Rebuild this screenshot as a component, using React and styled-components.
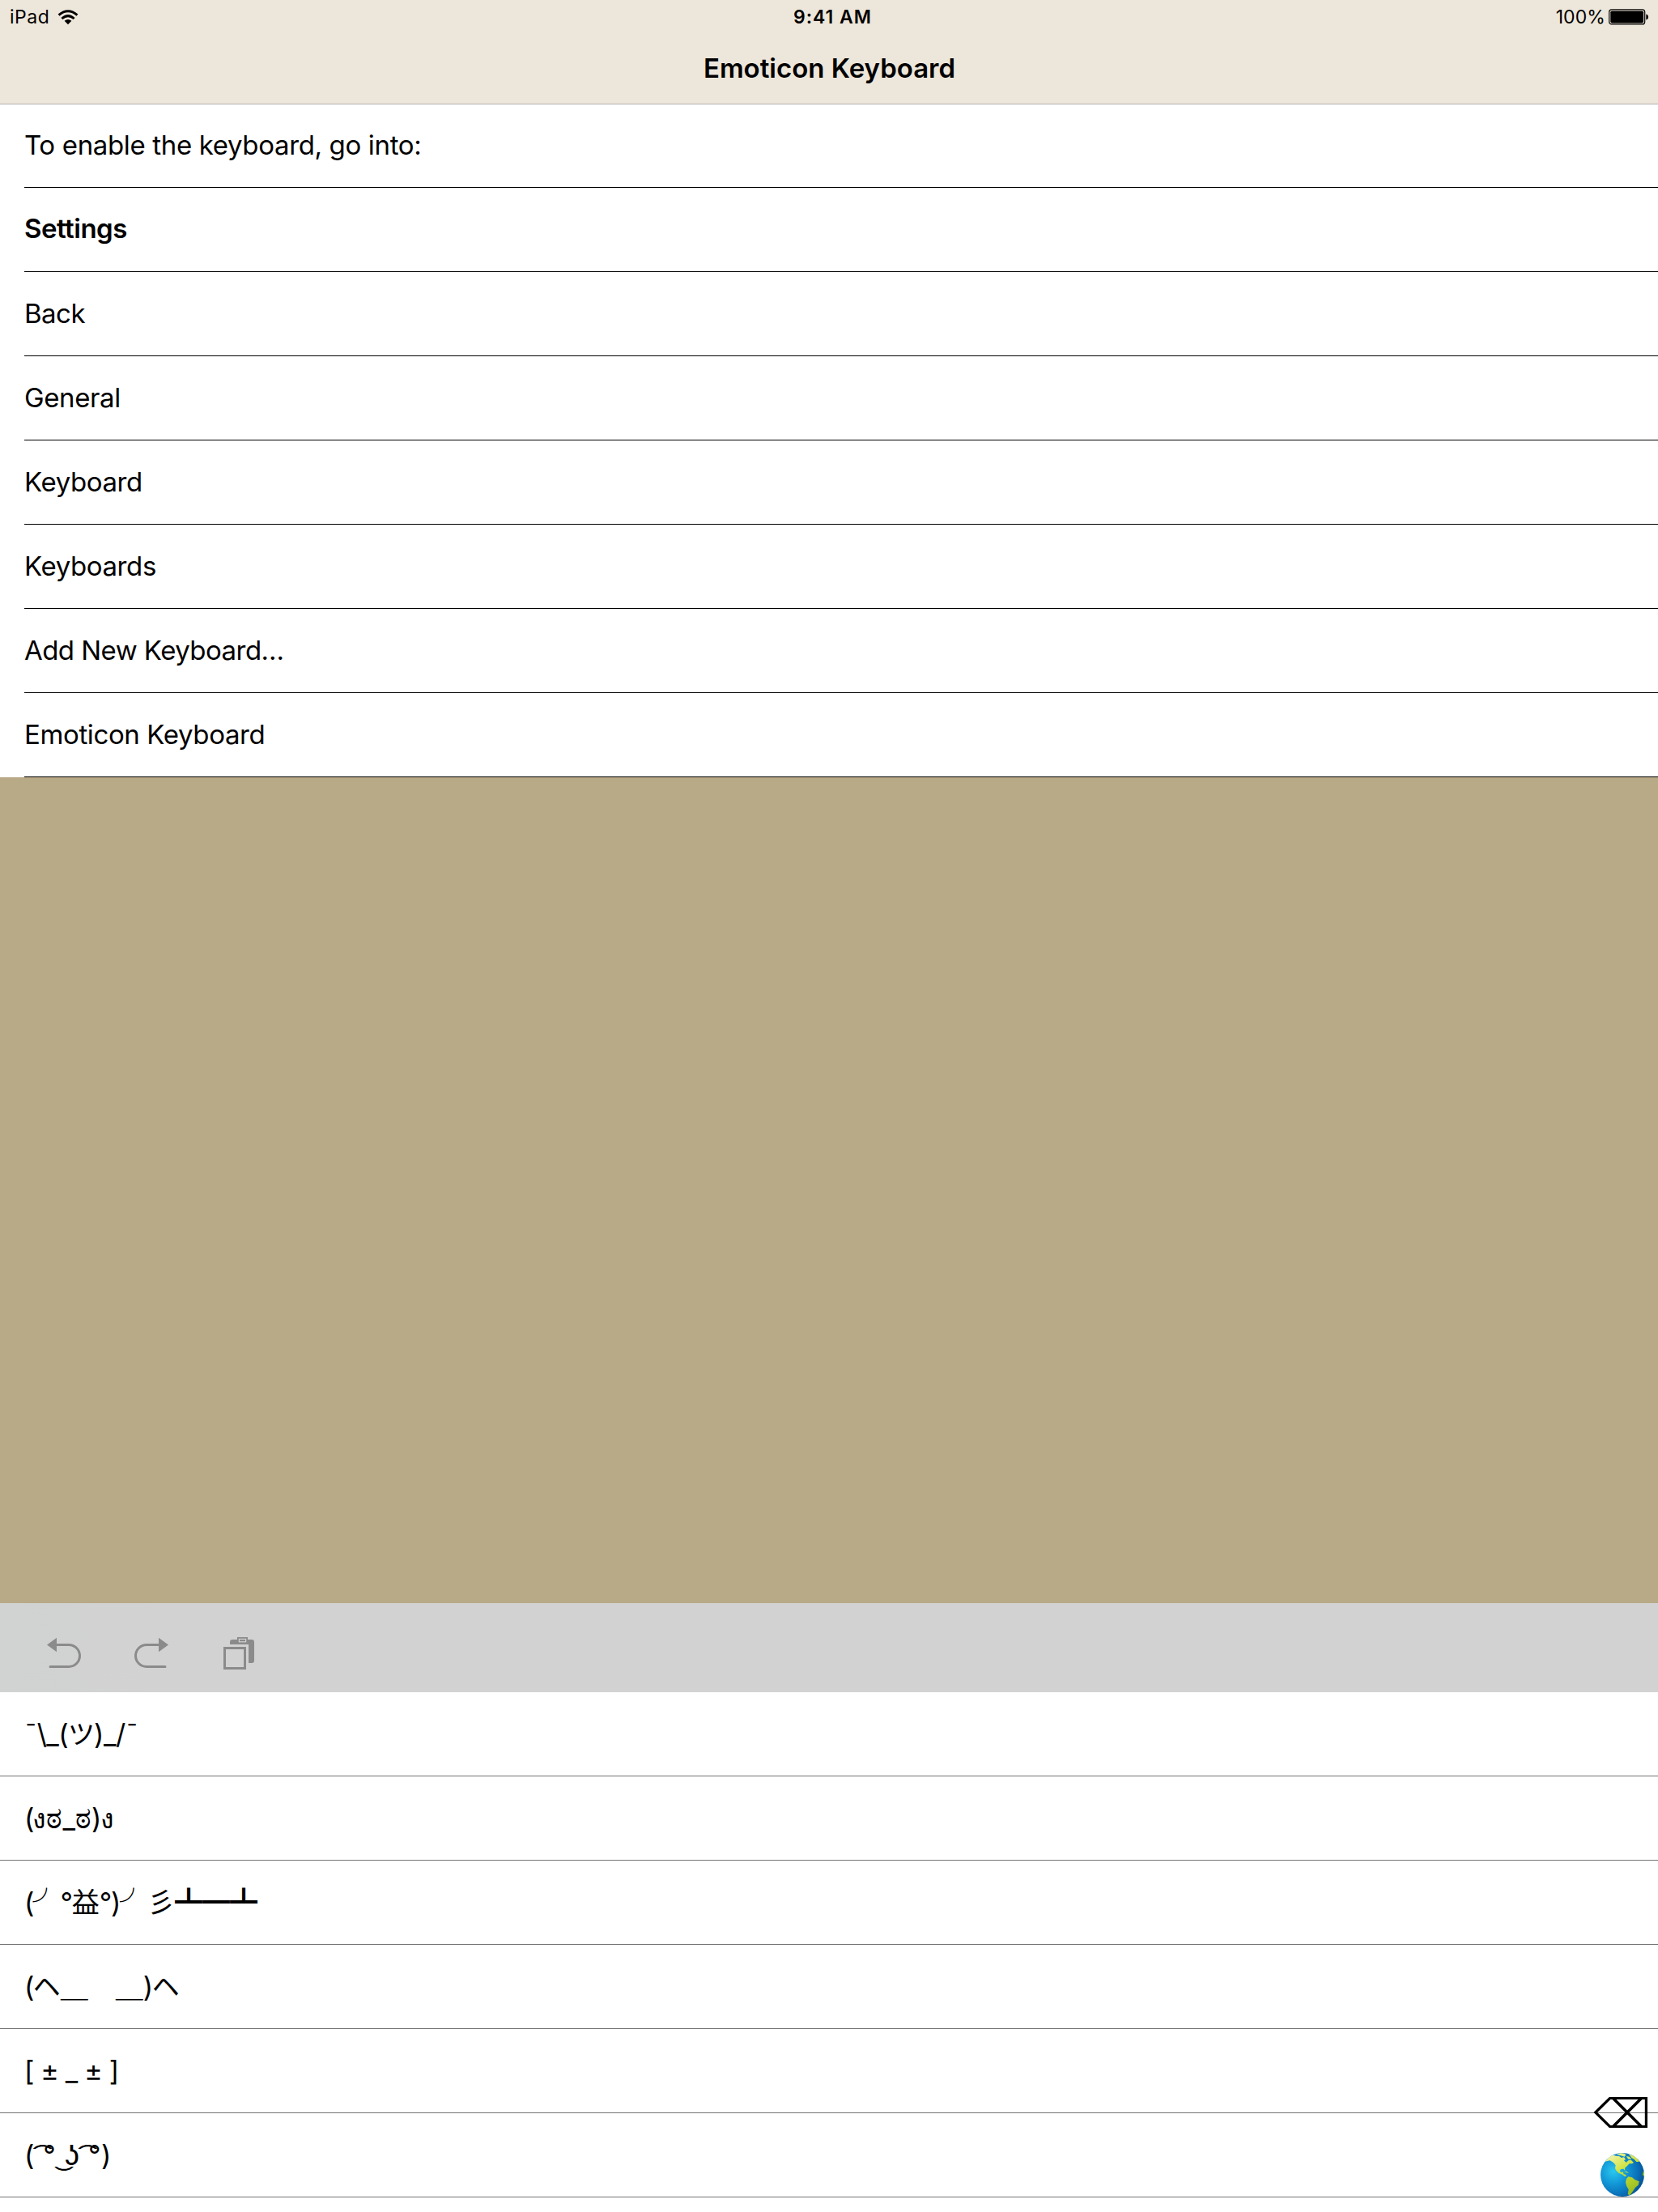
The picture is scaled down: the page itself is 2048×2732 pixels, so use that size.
import React from "react";
import styled, { createGlobalStyle } from "styled-components";

const GlobalStyle = createGlobalStyle`
  html, body { margin: 0; padding: 0; background: #b8a987; }
`;

const Screen = styled.main`
  position: relative;
  display: flex;
  flex-direction: column;
  width: 2048px;
  height: 2732px;
  overflow: hidden;
  background: #b8a987;
  color: #000;
  font-family: Inter, "Noto Sans CJK JP", "Noto Sans", "DejaVu Sans", sans-serif;
`;

const Header = styled.header`
  display: flex;
  flex-direction: column;
  box-sizing: border-box;
  height: 129px;
  flex: none;
  background: #ede6da;
  border-bottom: 1px solid #b0b0b2;
`;

const StatusBar = styled.div`
  display: grid;
  grid-template-columns: 1fr auto 1fr;
  align-items: center;
  height: 40px;
  padding: 1px 11px 0 12px;
  box-sizing: border-box;
  font-size: 23px;
  line-height: 39px;
`;

const StatusGroup = styled.div`
  display: flex;
  align-items: center;
  justify-content: ${(p) => (p.$end ? "flex-end" : "flex-start")};
  gap: ${(p) => (p.$end ? 4 : 10)}px;
  letter-spacing: ${(p) => (p.$end ? 0.1 : 0.5)}px;
`;

const StatusText = styled.span`
  padding-top: 1px;
`;

const Clock = styled.time`
  font-weight: 600;
  letter-spacing: 1px;
  padding: 1px 0 0 8px;
`;

const Title = styled.h1`
  margin: 0;
  height: 88px;
  padding-left: 1px;
  font-size: 33px;
  font-weight: 600;
  line-height: 88px;
  text-align: center;
`;

const StepList = styled.ol`
  list-style: none;
  margin: 0;
  padding: 0;
  flex: none;
  background: #fff;
`;

const Step = styled.li`
  box-sizing: border-box;
  height: ${(p) => (p.$first ? 103 : 104)}px;
  margin-left: 30px;
  border-bottom: 1px solid #000;
  font-size: 33px;
  line-height: ${(p) => (p.$first ? 100 : p.$bold ? 101 : 102)}px;
  font-weight: ${(p) => (p.$bold ? 600 : 400)};
  letter-spacing: ${(p) => p.$tracking}px;
  white-space: pre;
`;

const Backdrop = styled.div`
  flex: 1;
`;

const Toolbar = styled.div`
  display: flex;
  flex: none;
  box-sizing: border-box;
  height: 110px;
  padding: 40px 0 0 56px;
  gap: 62px;
  background: linear-gradient(90deg, #d0d3d1 0, #d2d2d2 200px);
`;

const ToolIcon = styled.svg`
  width: 46px;
  height: 46px;
  flex: none;
`;

const EmoticonList = styled.ul`
  list-style: none;
  margin: 0;
  padding: 0;
  flex: none;
  height: 642px;
  background: #fff;
`;

const EmoticonRow = styled.li`
  box-sizing: border-box;
  height: 104px;
  padding-left: 30px;
  border-bottom: 1px solid #737375;
  font-size: 34px;
  line-height: 104px;
  white-space: pre;
`;

const Run = styled.span`
  font-size: ${(p) => p.$size || 34}px;
  letter-spacing: ${(p) => p.$tracking}px;
  line-height: 1;
`;

const FloatingKeys = styled.div`
  position: absolute;
  right: 12px;
  bottom: 18px;
  display: flex;
  flex-direction: column;
  align-items: flex-end;
  gap: 29px;
`;

const DeleteIcon = styled.svg`
  width: 68px;
  height: 40px;
`;

const GlobeIcon = styled.svg`
  width: 56px;
  height: 56px;
  margin-right: 4px;
`;

const STEPS = [
  { text: "To enable the keyboard, go into:", tracking: -0.35 },
  { text: "Settings", tracking: -0.5, bold: true },
  { text: "Back", tracking: -0.5 },
  { text: "General", tracking: -0.4 },
  { text: "Keyboard", tracking: -0.4 },
  { text: "Keyboards", tracking: -0.4 },
  { text: "Add New Keyboard…", tracking: -0.55 },
  { text: "Emoticon Keyboard", tracking: -0.38 },
];

const EMOTICONS = [
  [["¯\\_(", -0.6], ["ツ", -1, 33], [")_/¯", -0.4]],
  [["(", -2], ["ง", 0], ["ಠ", 0, 37], ["_", 0], ["ಠ", 0, 37], [")", -1], ["ง", 0]],
  [["(", -1.8], ["╯", 0], ["°", -1.3], ["益", 0], ["°)", -1.3], ["╯彡┻━┻", 0]],
  [["(", -1.6], ["ヘ＿　＿", 0], [")", -1.6], ["ヘ", 0]],
  [["[ ± _ ± ]", -0.8]],
  [["( ͡° ͜ʖ ͡°)", 0.65]],
];

const Wifi = () => (
  <svg width="26" height="20" viewBox="0 0 26 20">
    <g fill="none" stroke="#000" strokeWidth="3">
      <path d="M1.6 7.6Q13 -2.2 24.4 7.6" />
      <path d="M5.4 12Q13 5.2 20.6 12" />
    </g>
    <path d="M8.6 14.8Q13 11 17.4 14.8L13 19.2Z" />
  </svg>
);

const Battery = () => (
  <svg width="50" height="20" viewBox="0 0 50 20">
    <rect x="0.7" y="0.9" width="44" height="18" rx="3" fill="none" stroke="#000" strokeWidth="1.2" />
    <rect x="2.3" y="2.4" width="40.8" height="15" rx="1.8" />
    <path d="M46.3 6.4Q49 7 49 9.9T46.3 13.4Z" />
  </svg>
);

const hookArrow = (
  <>
    <path d="M14 11.5H29a13.5 13.5 0 0 1 0 27H6" fill="none" stroke="#8a8b8a" strokeWidth="3" strokeLinecap="round" />
    <path d="M2 11.5L14 2.7V20.3Z" fill="#8a8b8a" />
  </>
);

export default function App() {
  return (
    <>
      <GlobalStyle />
      <Screen>
        <Header>
          <StatusBar>
            <StatusGroup>
              <StatusText>iPad</StatusText>
              <Wifi />
            </StatusGroup>
            <Clock>9:41 AM</Clock>
            <StatusGroup $end>
              <StatusText>100%</StatusText>
              <Battery />
            </StatusGroup>
          </StatusBar>
          <Title>Emoticon Keyboard</Title>
        </Header>

        <StepList>
          {STEPS.map((s, i) => (
            <Step key={s.text} $first={i === 0} $bold={s.bold} $tracking={s.tracking}>
              {s.text}
            </Step>
          ))}
        </StepList>

        <Backdrop />

        <Toolbar>
          <ToolIcon viewBox="0 0 46 46">{hookArrow}</ToolIcon>
          <ToolIcon viewBox="0 0 46 46">
            <g transform="translate(46 0) scale(-1 1)">{hookArrow}</g>
          </ToolIcon>
          <ToolIcon viewBox="0 0 46 46">
            <rect x="5.5" y="15.5" width="25" height="25" fill="none" stroke="#8a8b8a" strokeWidth="3" />
            <path d="M12 11V8Q12 5 15 5H39Q42 5 42 8V31Q42 34 39 34H35V11Z" fill="#8a8b8a" />
            <rect x="21" y="2" width="13" height="7" fill="#8a8b8a" />
            <rect x="23.4" y="4.4" width="8.2" height="3.4" fill="none" stroke="#d2d2d2" strokeWidth="1.2" />
          </ToolIcon>
        </Toolbar>

        <EmoticonList>
          {EMOTICONS.map((runs, i) => (
            <EmoticonRow key={i}>
              {runs.map(([text, tracking, size], j) => (
                <Run key={j} $tracking={tracking} $size={size}>{text}</Run>
              ))}
            </EmoticonRow>
          ))}
        </EmoticonList>

        <FloatingKeys>
          <DeleteIcon viewBox="0 0 68 40">
            <g fill="none" stroke="#000" strokeWidth="3.2">
              <path d="M2.8 20L20.5 2.5H65.4V37.5H20.5Z" />
              <path d="M24.5 2.5L59.5 37.5M59.5 2.5L24.5 37.5" strokeWidth="3.6" />
            </g>
          </DeleteIcon>
          <GlobeIcon viewBox="6 7 168 168">
            <defs>
              <radialGradient id="sea" cx="0.3" cy="0.42" r="0.72">
                <stop offset="0" stopColor="#2cc8ee" />
                <stop offset="0.4" stopColor="#1298d8" />
                <stop offset="0.8" stopColor="#0a6cb4" />
                <stop offset="1" stopColor="#07508f" />
              </radialGradient>
              <linearGradient id="land" gradientUnits="userSpaceOnUse" x1="50" y1="20" x2="145" y2="160">
                <stop offset="0" stopColor="#eef2a0" />
                <stop offset="0.4" stopColor="#cde23a" />
                <stop offset="1" stopColor="#8fb81c" />
              </linearGradient>
              <clipPath id="disc"><circle cx="90" cy="91" r="81" /></clipPath>
            </defs>
            <circle cx="90" cy="91" r="81" fill="url(#sea)" />
            <g clipPath="url(#disc)">
              <g fill="url(#land)">
                <path d="M26 42L40 26L54 17L66 21L78 22L86 28L96 26L102 34L96 38L104 46L112 38L122 36L132 46L126 50L116 50L108 58L99 66L100 76L94 69L84 70L80 78L86 83L93 80L94 88L101 90L106 97L98 97L90 90L76 84L66 74L63 66L65 56L57 46L44 38L34 40Z" />
                <path d="M68 15L84 10L96 12L104 17L98 24L84 20Z" />
                <path d="M104 22L116 24L124 34L112 33Z" />
                <path d="M112 14L132 20L148 34L152 43L142 43L134 34L124 28L118 20Z" />
                <path d="M96 78L106 79L114 85L104 83Z" />
                <path d="M105 106L112 98L126 101L136 109L152 116L149 129L138 138L130 150L118 167L110 164L113 146L105 132L102 118Z" />
                <path d="M174 76L167 80L165 90L168 96L174 94Z" />
              </g>
            </g>
          </GlobeIcon>
        </FloatingKeys>
      </Screen>
    </>
  );
}
